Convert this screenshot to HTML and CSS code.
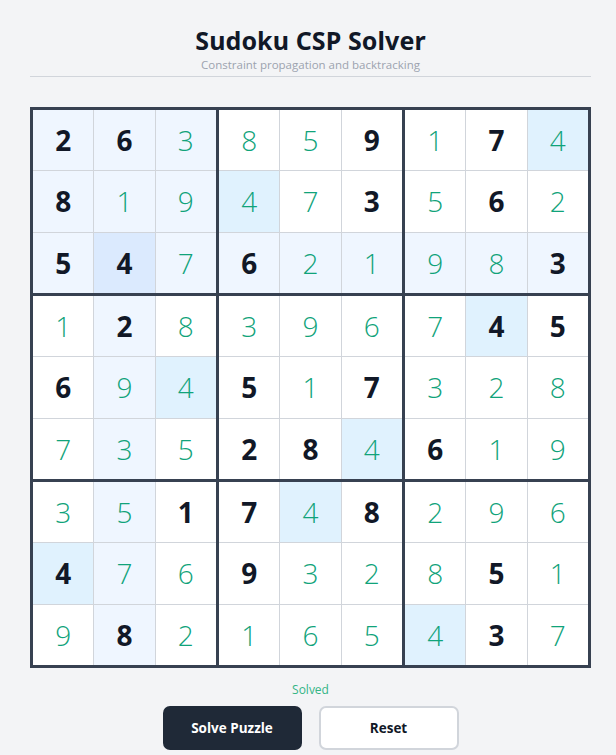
FILE: index.html
```html
<!DOCTYPE html>
<html lang="en">
<head>
<meta charset="utf-8">
<title>Sudoku CSP Solver</title>
<link rel="stylesheet" href="styles.css">
</head>
<body>
<div class="app">
  <header class="header">
    <h1 class="title">Sudoku CSP Solver</h1>
    <p class="subtitle">Constraint propagation and backtracking</p>
  </header>
  <div class="board" id="board"></div>
  <div class="status">Solved</div>
  <div class="actions">
    <button class="btn btn-primary">Solve Puzzle</button>
    <button class="btn btn-secondary">Reset</button>
  </div>
</div>
<script src="app.js"></script>
</body>
</html>
```
FILE: styles.css
```css
* { box-sizing: border-box; }
html, body { margin: 0; padding: 0; }
body {
  background: #f3f4f6;
  font-family: "Open Sans", "Noto Sans", "DejaVu Sans", sans-serif;
  color: #111827;
}
.app {
  width: 561px;
  margin-left: 30px;
  padding-top: 25px;
}
.header {
  text-align: center;
  border-bottom: 1px solid #d1d5db;
  padding-bottom: 3px;
}
.title {
  margin: 0;
  font-family: "Noto Sans", "Open Sans", sans-serif;
  font-size: 25px;
  line-height: 30px;
  font-weight: 700;
  color: #111827;
  letter-spacing: 0.1px;
}
.subtitle {
  margin: 2px 0 0;
  font-size: 11.5px;
  line-height: 16px;
  color: #9ca3af;
}
.board {
  margin-top: 30px;
  width: 561px;
  height: 561px;
  background: #374151;
  padding: 3px;
  display: grid;
  grid-template-columns: repeat(3, 1fr);
  grid-template-rows: repeat(3, 1fr);
  gap: 3px;
}
.box {
  background: #d1d5db;
  display: grid;
  grid-template-columns: repeat(3, 1fr);
  grid-template-rows: repeat(3, 1fr);
  gap: 1px;
}
.cell {
  background: #ffffff;
  display: flex;
  align-items: center;
  justify-content: center;
  font-size: 28px;
  line-height: 1;
}
.cell.related { background: #eff6ff; }
.cell.same { background: #e0f2fe; }
.cell.selected { background: #dbeafe; }
.cell.given { font-weight: 700; color: #111827; }
.cell.solved { font-weight: 300; color: #10a37a; }
.status {
  margin-top: 14px;
  text-align: center;
  font-size: 12px;
  line-height: 16px;
  color: #34b586;
}
.actions {
  margin-top: 8px;
  display: flex;
  justify-content: center;
  gap: 17px;
}
.btn {
  width: 139px;
  height: 44px;
  border-radius: 7px;
  font-family: inherit;
  font-size: 13.5px;
  font-weight: 700;
  cursor: pointer;
}
.btn-primary {
  background: #1f2937;
  color: #ffffff;
  border: none;
}
.btn-secondary {
  width: 140px;
  background: #ffffff;
  color: #111827;
  border: 2px solid #d1d5db;
}
```
FILE: app.js
```js
(function () {
  var grid = [
    "263859174",
    "819473562",
    "547621983",
    "128396745",
    "694517328",
    "735284619",
    "351748296",
    "476932851",
    "982165437"
  ];
  var givens = [
    "110001010",
    "100001010",
    "110100001",
    "010000011",
    "100101000",
    "000110100",
    "001101000",
    "100100010",
    "010000010"
  ];
  var selR = 2, selC = 1;
  var selVal = grid[selR][selC];
  var board = document.getElementById("board");
  for (var b = 0; b < 9; b++) {
    var box = document.createElement("div");
    box.className = "box";
    var br = Math.floor(b / 3) * 3, bc = (b % 3) * 3;
    for (var i = 0; i < 9; i++) {
      var r = br + Math.floor(i / 3), c = bc + (i % 3);
      var cell = document.createElement("div");
      var v = grid[r][c];
      var cls = ["cell", givens[r][c] === "1" ? "given" : "solved"];
      if (r === selR && c === selC) cls.push("selected");
      else if (v === selVal) cls.push("same");
      else if (r === selR || c === selC ||
               (Math.floor(r / 3) === Math.floor(selR / 3) && Math.floor(c / 3) === Math.floor(selC / 3)))
        cls.push("related");
      cell.className = cls.join(" ");
      cell.textContent = v;
      box.appendChild(cell);
    }
    board.appendChild(box);
  }
})();
```
